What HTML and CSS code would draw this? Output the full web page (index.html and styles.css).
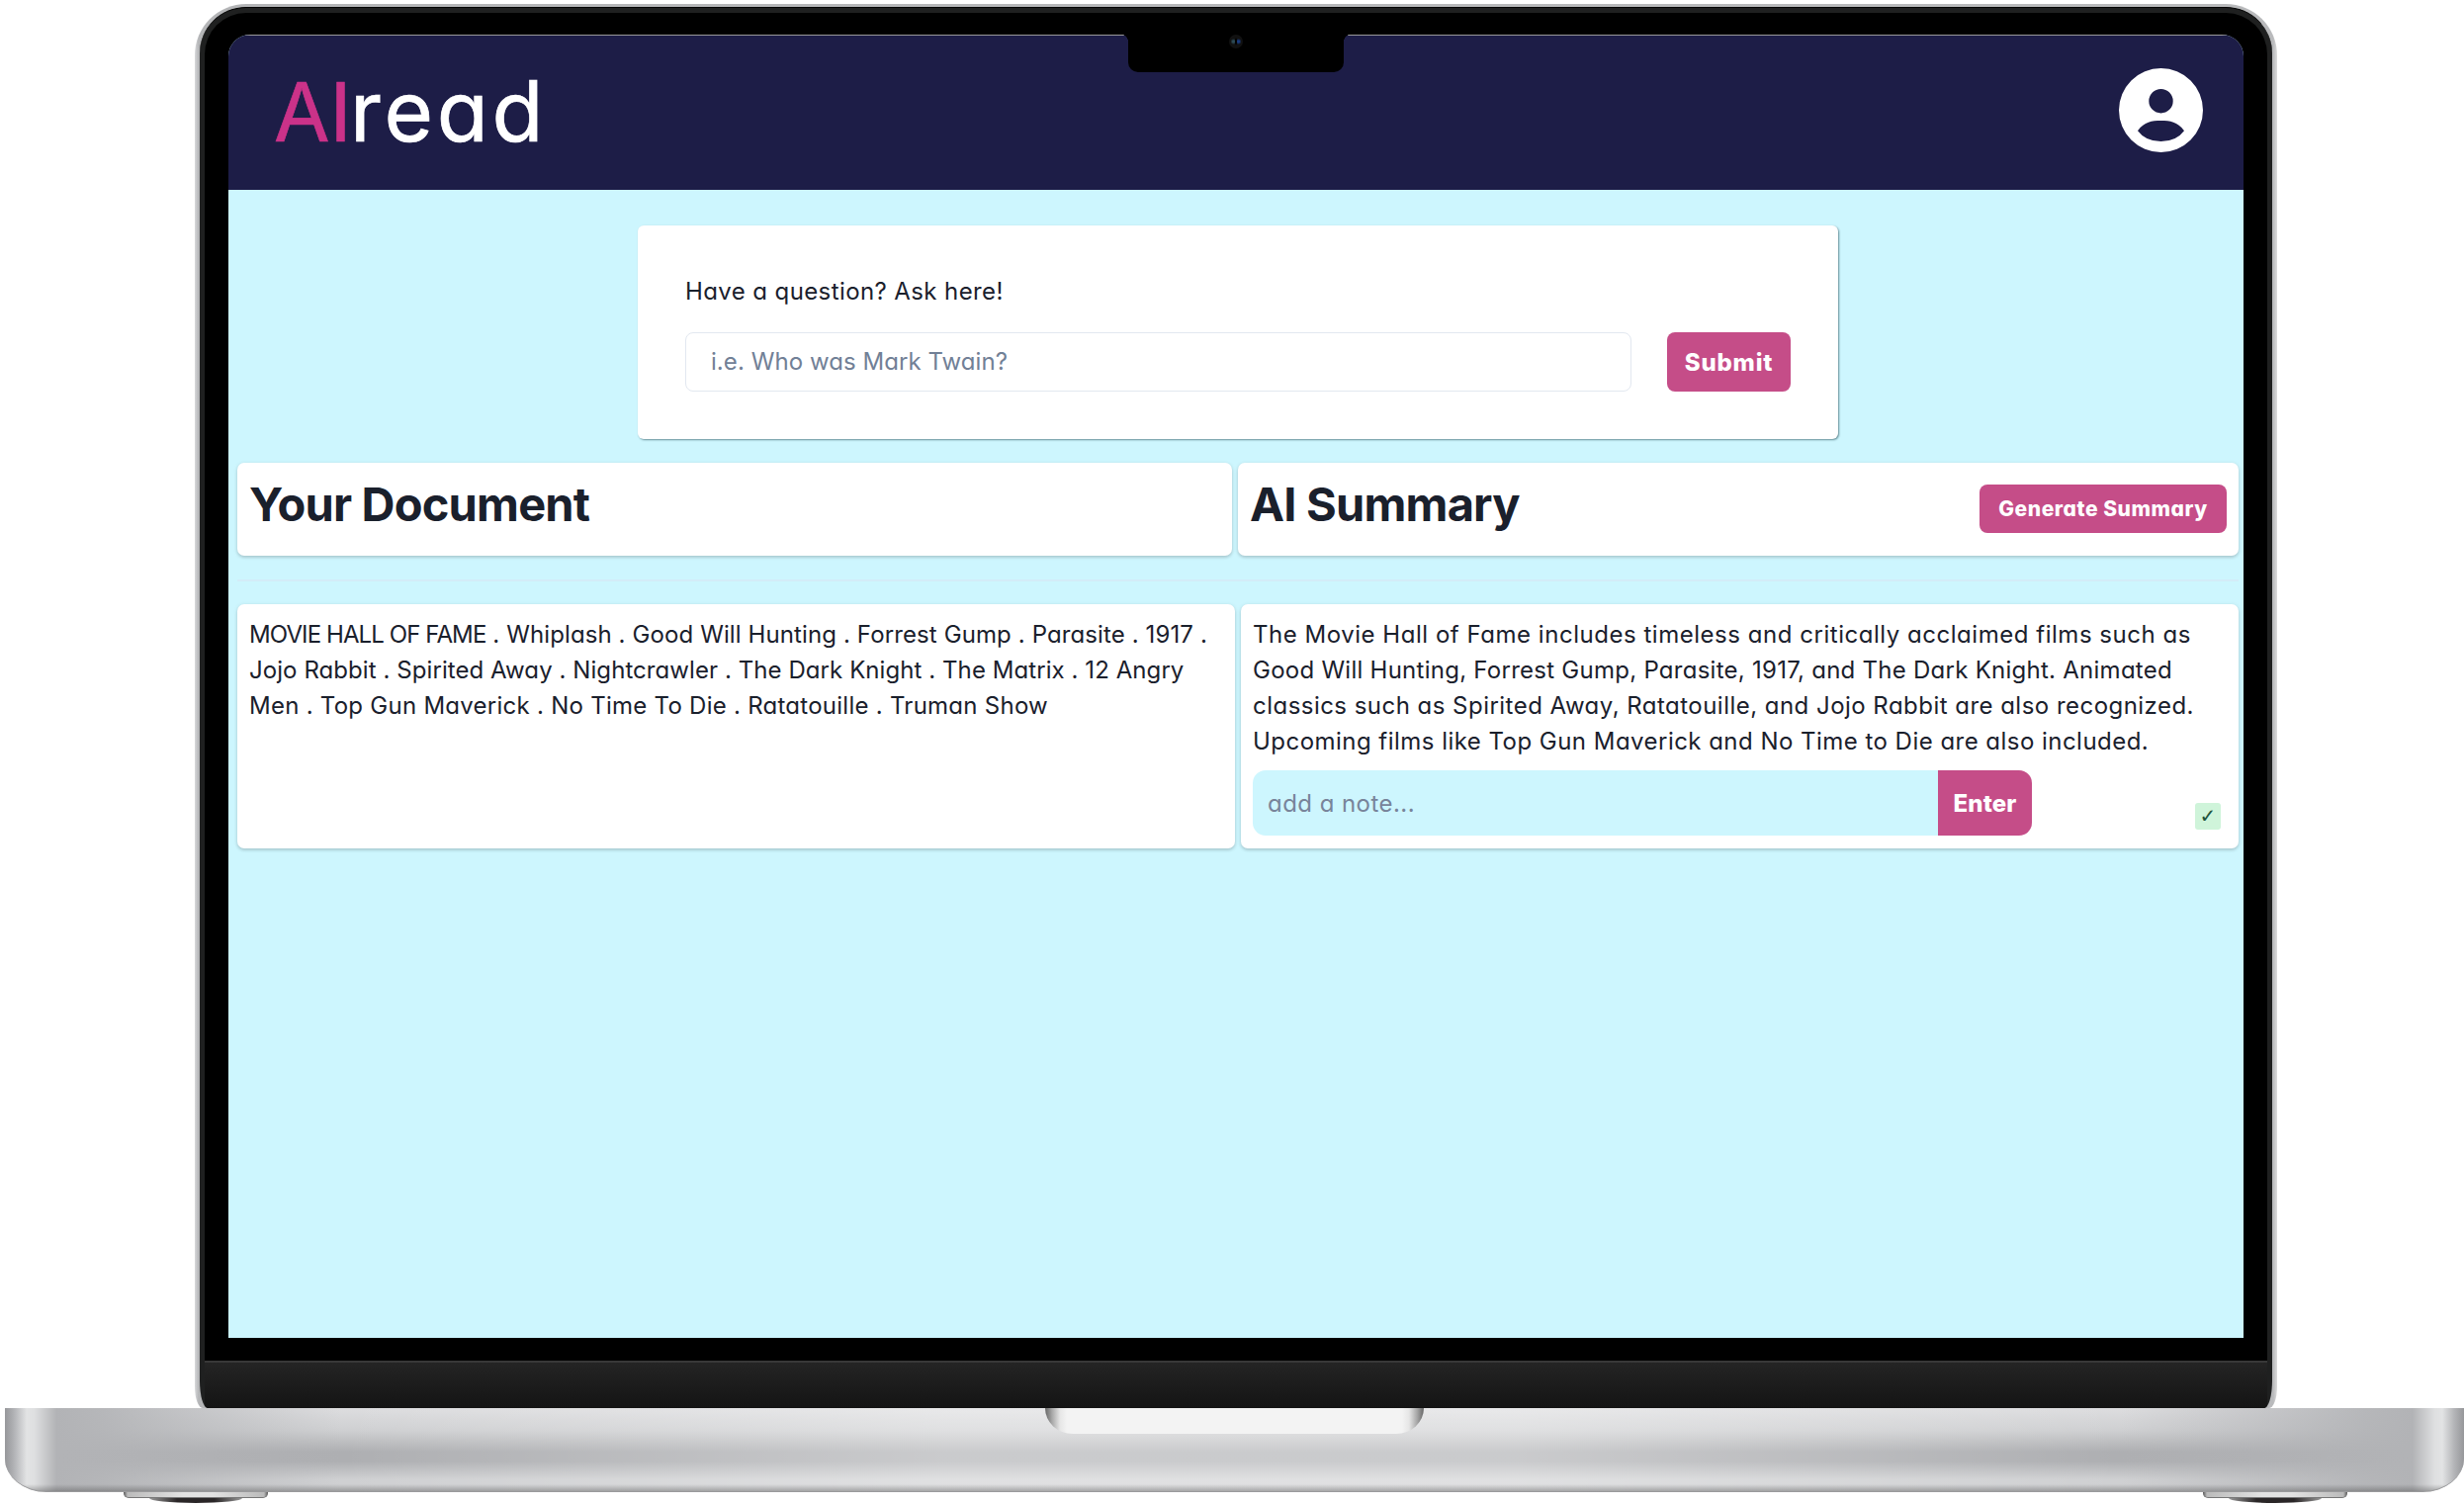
FILE: index.html
```html
<!DOCTYPE html>
<html lang="en">
<head>
<meta charset="utf-8">
<title>AIread</title>
<link rel="stylesheet" href="styles.css">
</head>
<body>
<div class="laptop">
  <div class="lid">
    <div class="rim">
      <div class="bezel">
        <div class="notch"><span class="camera"></span></div>
        <main class="screen">
          <header class="topbar">
            <div class="logo"><span class="logo-ai">AI</span><span class="logo-read">read</span></div>
            <svg class="avatar" viewBox="0 0 85 85" aria-label="Account"><path fill="#fff" fill-rule="evenodd" d="M42.500 0a42.500 42.500 0 1 1 0 85a42.500 42.500 0 1 1 0-85zM42.500 21a12.200 12.200 0 1 0 0 24.400a12.200 12.200 0 1 0 0-24.400zM19 63.200Q27 74 42.500 74T66 63.200C59 54 52 53 42.500 53S26 54 19 63.200z"/></svg>
          </header>
          <section class="ask">
            <p class="ask-label">Have a question? Ask here!</p>
            <div class="ask-row">
              <div class="ask-input">i.e. Who was Mark Twain?</div>
              <div class="btn submit">Submit</div>
            </div>
          </section>
          <section class="titles">
            <div class="card title-card doc"><h1>Your Document</h1></div>
            <div class="card title-card sum"><h1>AI Summary</h1><div class="btn generate">Generate Summary</div></div>
          </section>
          <hr class="rule">
          <section class="panels">
            <div class="card panel">
              <p class="line track-1"><span class="caps">MOVIE HALL OF FAME</span> . Whiplash . Good Will Hunting . Forrest Gump . Parasite . 1917 .</p>
              <p class="line track-2">Jojo Rabbit . Spirited Away . Nightcrawler . The Dark Knight . The Matrix . 12 Angry</p>
              <p class="line track-3">Men . Top Gun Maverick . No Time To Die . Ratatouille . Truman Show</p>
            </div>
            <div class="card panel">
              <p class="line track-5">The Movie Hall of Fame includes timeless and critically acclaimed films such as</p>
              <p class="line track-3">Good Will Hunting, Forrest Gump, Parasite, 1917, and The Dark Knight. Animated</p>
              <p class="line track-4">classics such as Spirited Away, Ratatouille, and Jojo Rabbit are also recognized.</p>
              <p class="line track-4">Upcoming films like Top Gun Maverick and No Time to Die are also included.</p>
              <div class="note-row">
                <div class="note">add a note...</div>
                <div class="btn enter">Enter</div>
                <span class="badge">✓</span>
              </div>
            </div>
          </section>
        </main>
      </div>
      <div class="chin"></div>
    </div>
  </div>
  <div class="base"><div class="scoop"></div></div>
  <div class="feet"><span class="foot"></span><span class="foot"></span></div>
</div>
</body>
</html>
```
FILE: styles.css
```css
* { box-sizing: border-box; }
body {
  margin: 0;
  background: #fff;
  color: #1a202c;
  font-family: Inter, "Liberation Sans", sans-serif;
  font-size: 24px;
  font-feature-settings: "cv11";
}
p, h1 { margin: 0; white-space: nowrap; }
.laptop { width: 2492px; height: 1522px; padding-top: 4px; overflow: hidden; }

.lid {
  width: 2106px;
  height: 1420px;
  margin-left: 197px;
  padding: 3px 5px 0;
  border-radius: 52px 52px 8px 8px / 52px 52px 22px 22px;
  background: linear-gradient(90deg, #d8d9db, #b4b5b7 4px, #b9babc 2102px, #dcdcdc);
}
.rim {
  height: 1417px;
  padding: 5px 5px 0;
  border-top: 1px solid #000;
  border-radius: 47px 47px 8px 8px / 47px 47px 28px 28px;
  background: #1f2020;
  overflow: hidden;
}
.bezel {
  position: relative;
  height: 1363px;
  padding: 22px 24px 0;
  border-radius: 42px 42px 0 0;
  background: #000;
}
.chin {
  height: 48px;
  border-top: 2px solid #383838;
  background: linear-gradient(#242424, #141414);
}
.notch {
  position: absolute;
  top: 22px;
  left: 934px;
  width: 218px;
  height: 38px;
  border-radius: 0 0 10px 10px;
  background: #000;
}
.notch::before,
.notch::after {
  content: "";
  position: absolute;
  top: 0;
  left: -6px;
  width: 6px;
  height: 7px;
  background: radial-gradient(ellipse 6px 7px at 0 100%, transparent 95%, #000);
}
.notch::after { left: 218px; transform: scaleX(-1); }
.camera {
  position: absolute;
  top: 0;
  left: 102px;
  width: 14px;
  height: 14px;
  border-radius: 50%;
  background: radial-gradient(ellipse 1.500px 4px at 50% 50%, #000 60%, transparent), radial-gradient(circle at 68% 50%, #173a80 1px, transparent 3px), radial-gradient(circle at 32% 50%, #2c4a55 1px, transparent 3px), #111;
}
.screen {
  height: 1318px;
  border-radius: 22px 22px 0 0;
  background: #cdf6fe;
  overflow: hidden;
}
.topbar {
  display: flex;
  justify-content: space-between;
  height: 157px;
  padding: 33px 41px 0 46px;
  border-top: 1px solid #999;
  background: #1d1d47;
}
.logo {
  display: flex;
  align-items: baseline;
  width: 280px;
  margin-top: -1px;
  font-size: 82px;
  line-height: 90px;
  color: #fff;
  -webkit-text-stroke: .700px currentColor;
}
.logo-ai { width: 77px; color: #cb3289; letter-spacing: 0; }
.logo-read { font-size: 85px; letter-spacing: 3.800px; }
.avatar { width: 85px; height: 85px; }

.ask {
  width: 1214px;
  height: 216px;
  margin: 36px 0 0 414px;
  padding: 48px 48px 0;
  border-radius: 6px;
  background: #fff;
  box-shadow: 1px 1px 2px rgba(0, 40, 50, .5);
}
.ask-label { height: 36px; line-height: 37px; letter-spacing: .4px; }
.ask-row { display: flex; gap: 36px; margin-top: 24px; }
.ask-input {
  width: 957px;
  height: 60px;
  padding-left: 25px;
  border: 1px solid #e2e8f0;
  border-radius: 8px;
  line-height: 58px;
  letter-spacing: .060px;
  color: #718096;
}
.btn {
  display: flex;
  align-items: center;
  justify-content: center;
  border-radius: 8px;
  background: #c54d88;
  color: #fff;
  font-weight: 800;
  white-space: nowrap;
}
.submit { width: 125px; height: 60px; letter-spacing: .8px; }

.card {
  border-radius: 7px;
  background: #fff;
  box-shadow: 0 1px 4px rgba(0, 0, 0, .12), 0 2px 3px rgba(0, 0, 0, .1);
}
.titles { display: flex; gap: 6px; margin: 24px 5px 0 9px; }
.title-card {
  display: flex;
  justify-content: space-between;
  height: 94px;
  padding: 13px 12px 0;
}
.doc { width: 1006px; }
.sum { width: 1012px; }
h1 {
  height: 58px;
  font-size: 47px;
  line-height: 58px;
  font-weight: 700;
  font-feature-settings: normal;
  letter-spacing: -.8px;
}
.generate { width: 250px; height: 49px; margin-top: 9px; font-size: 21px; letter-spacing: .550px; }
.rule {
  height: 2px;
  margin: 24px 5px 23px 9px;
  border: 0;
  background: #d3ecf8;
}
.panels { display: grid; grid-template-columns: 1009px 1009px; gap: 6px; margin-left: 9px; }
.panel { height: 247px; padding: 12px 12px 0; }
.line { height: 36px; line-height: 37px; }
.track-1 { letter-spacing: .110px; }
.caps { letter-spacing: -.9px; }
.track-2 { letter-spacing: .070px; }
.track-3 { letter-spacing: .260px; }
.track-4 { letter-spacing: .470px; }
.track-5 { letter-spacing: .530px; }
.note-row { display: flex; margin-top: 12px; }
.note {
  width: 693px;
  height: 66px;
  padding-left: 15px;
  border-radius: 13px 0 0 13px;
  background: #cdf6fe;
  line-height: 67px;
  letter-spacing: .450px;
  color: #78849a;
}
.enter { width: 95px; height: 66px; border-radius: 0 13px 13px 0; letter-spacing: .1px; }
.badge {
  width: 26px;
  height: 27px;
  margin: 33px 0 0 165px;
  border-radius: 3px;
  background: #cff4da;
  color: #22543d;
  font: 700 20px/27px "DejaVu Sans", sans-serif;
  text-align: center;
}

.base {
  width: 2487px;
  height: 85px;
  margin-left: 5px;
  border-bottom: 1px solid #9a9a9c;
  border-radius: 0 0 42px 42px / 0 0 34px 34px;
  background:
    linear-gradient(transparent 77px, rgba(60, 60, 60, .35)),
    linear-gradient(90deg, #96979a, #b4b5b8 10px, #e2e3e4 22px, #dedfe0 30px, #b2b3b6 52px, rgba(178, 179, 182, .9) 100px, transparent 340px, rgba(255, 255, 255, .35) 950px, rgba(255, 255, 255, .35) 1530px, transparent 2140px, rgba(178, 179, 182, .9) 2387px, #b2b3b6 2435px, #dedfe0 2457px, #e2e3e4 2465px, #b4b5b8 2477px, #96979a),
    linear-gradient(#dddddf, #cfd0d2 22px, #aeafb2 44px, #aeafb2 54px, #cfd0d2 72px, #cfd0d2);
}
.scoop {
  width: 383px;
  height: 26px;
  margin-left: 1052px;
  border-radius: 0 0 28px 28px / 0 0 26px 26px;
  background: linear-gradient(90deg, #666, #a8a8a8 7px, #e6e6e6 15px, #f3f3f3 22px, #f3f3f3 361px, #e6e6e6 368px, #a8a8a8 376px, #666);
}
.feet { display: flex; gap: 1957px; padding-left: 120px; }
.foot {
  width: 146px;
  height: 6px;
  margin-left: 5px;
  margin-right: -5px;
  border-radius: 0 0 5px 5px;
  border-bottom: 1px solid #777;
  background: linear-gradient(90deg, #555, #bbb 4px, #e2e2e2 60px, #e2e2e2 90px, #bbb 142px, #555);
}
.foot::after {
  content: "";
  display: block;
  width: 94px;
  height: 5px;
  margin: 6px auto 0;
  border-radius: 0 0 50% 50% / 0 0 100% 100%;
  background: linear-gradient(90deg, #999, #2a2627 30%, #2a2627 70%, #999);
}
```
